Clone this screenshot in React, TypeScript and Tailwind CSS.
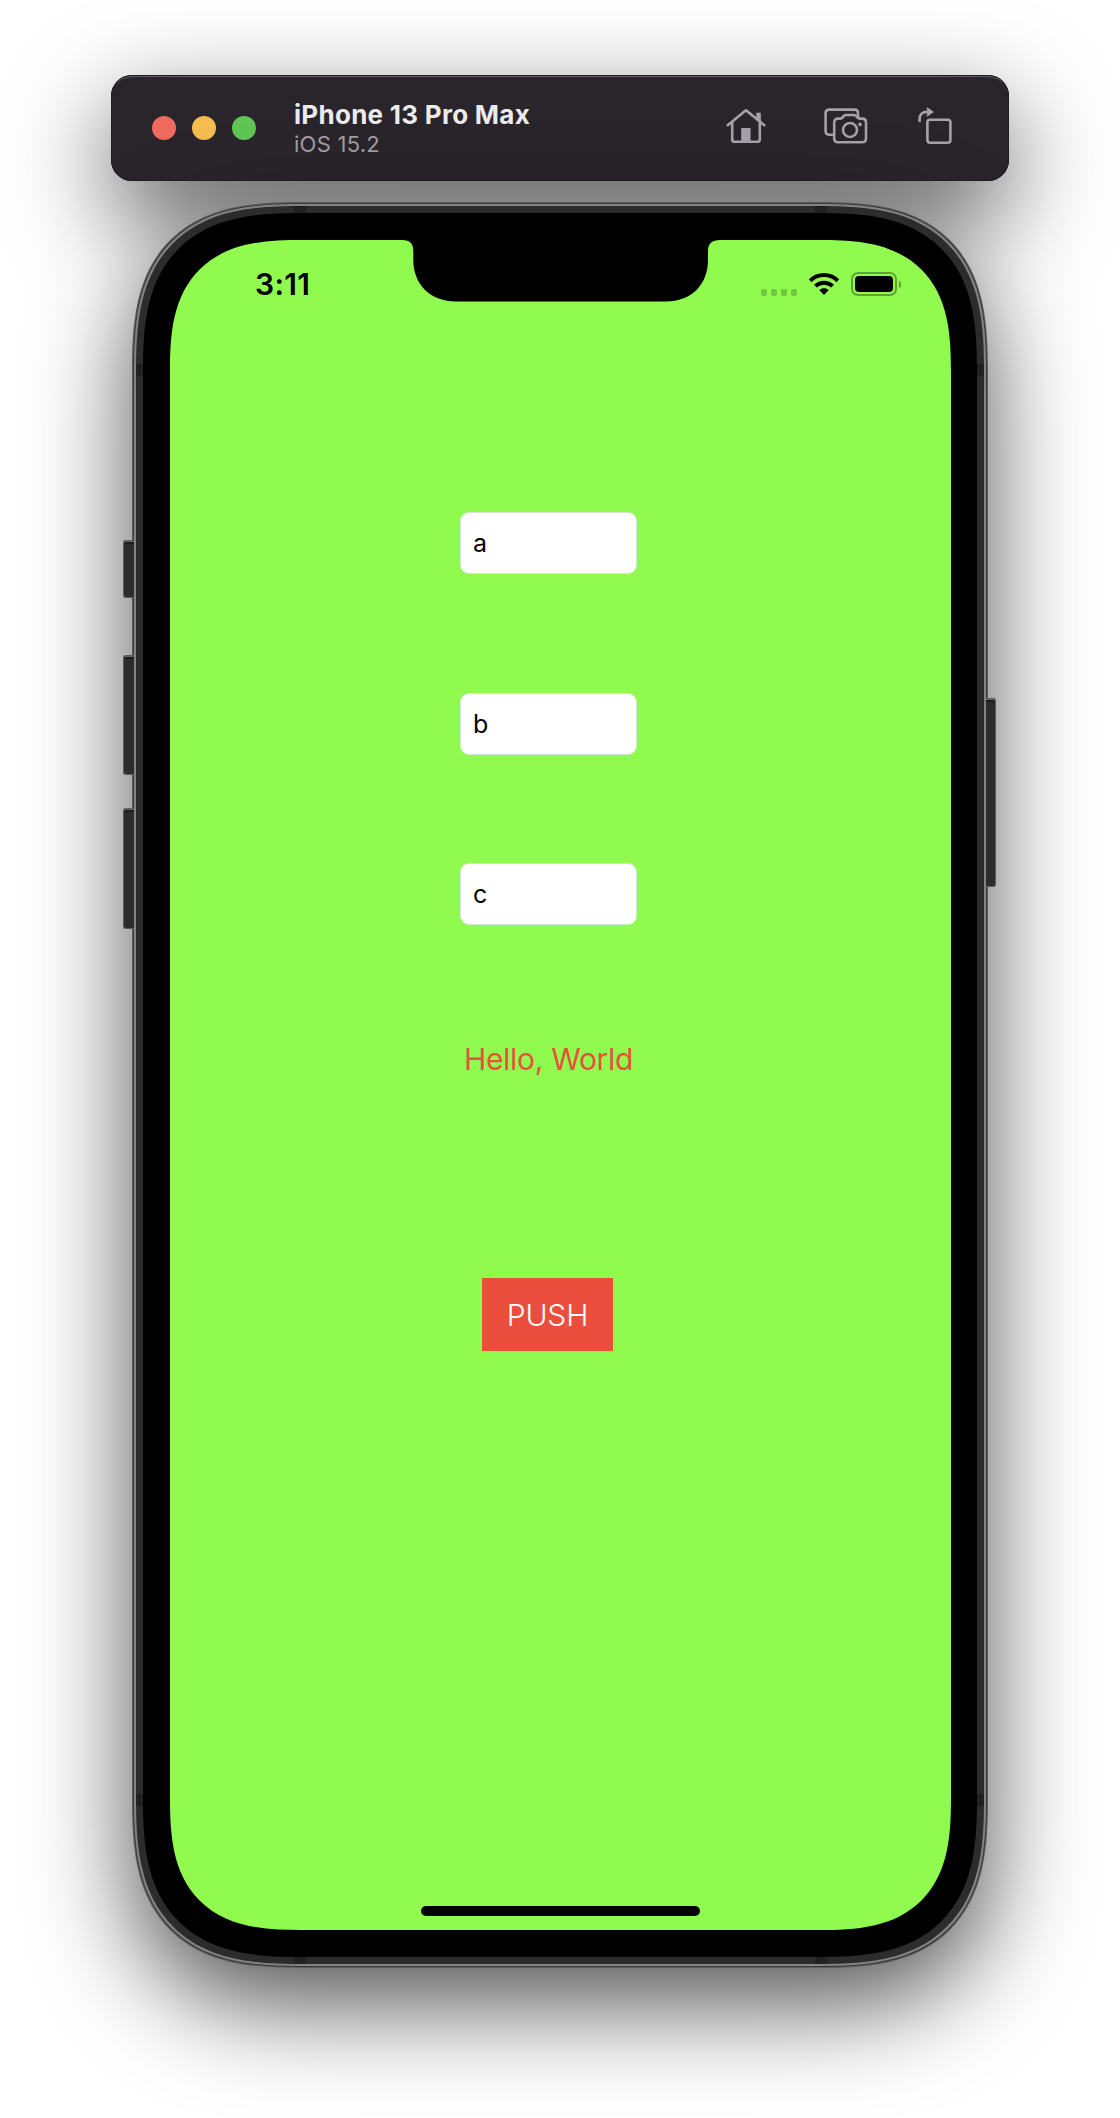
import React from "react";

function HomeIcon() {
  return (
    <svg width="40" height="36" viewBox="0 0 40 36" fill="none" stroke="#a7a1aa" strokeWidth="2.6" strokeLinecap="round" strokeLinejoin="round">
      <path d="M1.7 17.2 L20 2.2 L38.3 17.2" />
      <path d="M6.2 14.5 V31.2 Q6.2 33.8 8.8 33.8 H31.2 Q33.8 33.8 33.8 31.2 V14.5" />
      <path d="M30.8 5 H34.6 V14 L30.8 10.8 Z" fill="#a7a1aa" stroke="#a7a1aa" strokeWidth="0.6" />
      <path d="M15.2 20 H24.6 V34 H15.2 Z" fill="#a7a1aa" stroke="none" />
    </svg>
  );
}

function ScreenshotIcon() {
  return (
    <svg width="44" height="36" viewBox="0 0 44 36" fill="none" stroke="#a7a1aa" strokeWidth="2.6" strokeLinejoin="round" strokeLinecap="round">
      <path d="M8 26.8 H5.2 Q1.6 26.8 1.6 23.2 V5.2 Q1.6 1.6 5.2 1.6 H30.5 Q34 1.6 34 5.2 V9" />
      <path d="M10.2 14.4 Q10.2 10.6 14 10.6 H16.2 Q17.6 10.6 18.6 9.4 L19.6 8.2 Q20.6 7 22.2 7 H29.8 Q31.4 7 32.4 8.2 L33.4 9.4 Q34.4 10.6 35.8 10.6 H38.2 Q42 10.6 42 14.4 V30.4 Q42 34.2 38.2 34.2 H14 Q10.2 34.2 10.2 30.4 Z" />
      <circle cx="26" cy="22" r="7" />
      <circle cx="36" cy="16.4" r="1.8" fill="#a7a1aa" stroke="none" />
    </svg>
  );
}

function RotateIcon() {
  return (
    <svg width="34" height="38" viewBox="0 0 34 38" fill="none" stroke="#a7a1aa" strokeWidth="2.6" strokeLinecap="round">
      <path d="M1.6 14 V12.5 Q1.6 4.8 9.5 4.8" />
      <path d="M9.6 1 L15.2 4.9 L9.6 8.9 Z" fill="#a7a1aa" strokeWidth="1" strokeLinejoin="round" />
      <rect x="9.4" y="12.7" width="23" height="23" rx="2.6" />
    </svg>
  );
}

function Toolbar() {
  return (
    <header className="ml-[111px] flex h-[106px] w-[898px] items-center rounded-[21px] bg-[#29252b] pl-[41px] pr-[57px] shadow-[inset_0_0_0_1px_#1c1f1e,inset_0_3px_1px_-1px_#626264,0_36px_100px_rgba(0,0,0,0.65)]">
      <div className="flex gap-4">
        <span className="size-6 rounded-full bg-[#ee6a5f]" />
        <span className="size-6 rounded-full bg-[#f5bd4f]" />
        <span className="size-6 rounded-full bg-[#61c554]" />
      </div>
      <div className="ml-[38px] mt-px w-[240px] whitespace-nowrap">
        <h1 className="text-[26px] font-bold leading-[32px] tracking-[0.28px] text-[#ebebeb]">iPhone 13 Pro Max</h1>
        <p className="text-[22px] leading-[27px] tracking-[0.25px] text-[#a29ca4]">iOS 15.2</p>
      </div>
      <div className="mb-[4px] ml-auto flex items-center">
        <HomeIcon />
        <span className="w-[58px]" />
        <ScreenshotIcon />
        <span className="w-[50px]" />
        <RotateIcon />
      </div>
    </header>
  );
}

function Notch() {
  return (
    <svg className="absolute left-[232px] top-0" width="318" height="62" viewBox="0 0 318 62">
      <path d="M0 0 C8 0 11.3 3.5 11.3 11 V20 C11.3 45 29 61.5 54 61.5 H264 C289 61.5 306 45 306 20 V11 C306 3.5 310 0 318 0 Z" fill="#000" />
    </svg>
  );
}

function StatusBar() {
  return (
    <div className="flex h-[90px] items-start pl-[85px] pr-[50px]">
      <span className="mt-[25px] text-[30px] font-semibold leading-[38px] tracking-[0.3px]">3:11</span>
      <div className="ml-auto mt-[32px] flex h-6 items-center">
        <div className="mt-[17px] flex gap-[3.7px]">
          {[0, 1, 2, 3].map((n) => (
            <span key={n} className="size-[6.2px] rounded-[2px] bg-[#70c83e]" />
          ))}
        </div>
        <svg className="ml-[11px]" width="32" height="24" viewBox="0 0 32 24" fill="none" stroke="#000" strokeWidth="4">
          <path d="M2.2 8.7 C10 1.2 22 1.2 29.8 8.7" />
          <path d="M7.4 14.1 C12.4 9.5 19.6 9.5 24.6 14.1" />
          <path d="M11.3 18 C14 15.5 18 15.5 20.7 18 L16 23 Z" fill="#000" stroke="none" />
        </svg>
        <div className="ml-[11px] h-6 w-[46px] rounded-[7px] border-2 border-[#5fa535] p-[2px]">
          <div className="h-full w-full rounded-[4px] bg-black" />
        </div>
        <span className="ml-[2px] h-[7px] w-[2px] rounded-r-full bg-[#5fa535]" />
      </div>
    </div>
  );
}

function Field({ value }: { value: string }) {
  return (
    <div className="flex h-[62px] w-[177px] shrink-0 items-center rounded-[9px] border border-[#d9e3d2] bg-white px-[12px] pt-px text-[25px] text-black">
      {value}
    </div>
  );
}

function Screen() {
  return (
    <main className="relative h-[1690px] w-[781px] overflow-hidden rounded-[98px] bg-[#90fb4e] supports-[corner-shape:squircle]:rounded-[132px] supports-[corner-shape:squircle]:[corner-shape:superellipse(1.45)]">
      <Notch />
      <StatusBar />
      <div className="ml-[290px] flex w-[177px] flex-col items-center pt-[182px]">
        <Field value="a" />
        <span className="h-[119px]" />
        <Field value="b" />
        <span className="h-[108px]" />
        <Field value="c" />
        <p className="mt-[114px] whitespace-nowrap text-[30px] leading-[40px] tracking-[-0.3px] text-[#e8513b]">Hello, World</p>
        <button className="mr-[2px] mt-[199px] flex h-[73px] w-[131px] items-center justify-center bg-[#eb4e3d] pt-px text-[30px] font-light tracking-[-0.1px] text-white">
          PUSH
        </button>
      </div>
      <div className="absolute bottom-[14.5px] left-[251px] h-[9.5px] w-[279px] rounded-full bg-black" />
    </main>
  );
}

function SideButton({ place }: { place: string }) {
  return (
    <span className={`absolute z-10 rounded-[3px] border-[1.5px] border-[#5c5c5c] bg-[#2c2c2c] shadow-[inset_0_1px_0_#666,inset_0_3px_0_#1c1c1c] ${place}`} />
  );
}

function Phone() {
  return (
    <div className="relative ml-[132px] mt-[21px] w-[856px]">
      <SideButton place="left-[-9px] top-[338px] h-[58px] w-[11px] border-r-0 rounded-r-none" />
      <SideButton place="left-[-9px] top-[453px] h-[120px] w-[11px] border-r-0 rounded-r-none" />
      <SideButton place="left-[-9px] top-[606px] h-[121px] w-[11px] border-r-0 rounded-r-none" />
      <SideButton place="right-[-8px] top-[496px] h-[189px] w-[10px] border-l-0 rounded-l-none" />
      <div className="relative rounded-[130px] bg-[#5c5c5c] p-px shadow-[0_36px_100px_rgba(0,0,0,0.68)] supports-[corner-shape:squircle]:rounded-[170px] supports-[corner-shape:squircle]:[corner-shape:superellipse(1.45)]">
        <div className="rounded-[129px] bg-[#3c3c3c] p-px supports-[corner-shape:squircle]:rounded-[169px] supports-[corner-shape:squircle]:[corner-shape:superellipse(1.45)]">
          <div className="rounded-[128px] bg-[#838383] p-[2px] supports-[corner-shape:squircle]:rounded-[168px] supports-[corner-shape:squircle]:[corner-shape:superellipse(1.45)]">
            <div className="rounded-[126px] bg-[#2c2c2c] p-[7px] supports-[corner-shape:squircle]:rounded-[166px] supports-[corner-shape:squircle]:[corner-shape:superellipse(1.45)]">
              <div className="rounded-[119px] bg-black p-[27px] pr-[26px] supports-[corner-shape:squircle]:rounded-[159px] supports-[corner-shape:squircle]:[corner-shape:superellipse(1.45)]">
                <Screen />
              </div>
            </div>
          </div>
        </div>
        <span className="absolute left-[162px] top-[4px] h-[7px] w-3 bg-[#202020]" />
        <span className="absolute left-[683px] top-[4px] h-[7px] w-3 bg-[#202020]" />
        <span className="absolute bottom-[4px] left-[162px] h-[7px] w-3 bg-[#202020]" />
        <span className="absolute bottom-[4px] left-[683px] h-[7px] w-3 bg-[#202020]" />
        <span className="absolute left-[4px] top-[162px] h-3 w-[7px] bg-[#202020]" />
        <span className="absolute right-[4px] top-[162px] h-3 w-[7px] bg-[#202020]" />
        <span className="absolute bottom-[162px] left-[4px] h-3 w-[7px] bg-[#202020]" />
        <span className="absolute bottom-[162px] right-[4px] h-3 w-[7px] bg-[#202020]" />
      </div>
    </div>
  );
}

export default function App() {
  return (
    <div className="h-[2118px] w-[1120px] overflow-hidden bg-white pt-[75px] font-['Inter',sans-serif] text-black">
      <Toolbar />
      <Phone />
    </div>
  );
}
